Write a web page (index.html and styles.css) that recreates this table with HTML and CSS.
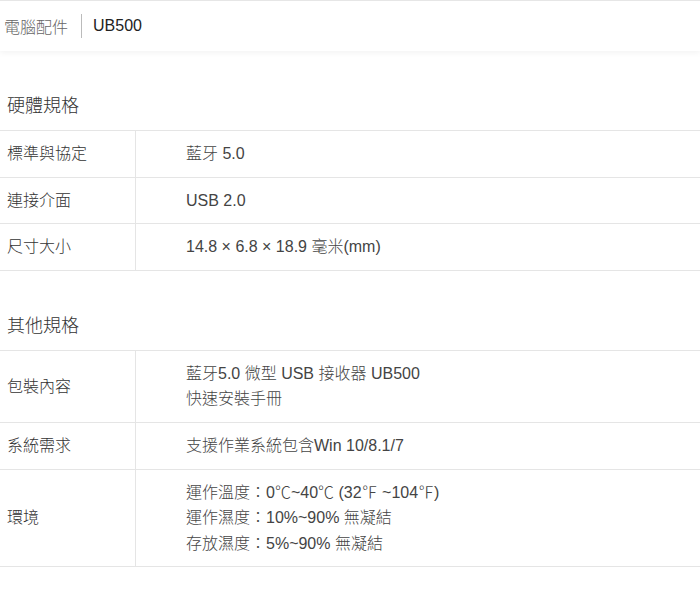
FILE: index.html
```html
<!DOCTYPE html>
<html lang="zh-Hant">
<head>
<meta charset="utf-8">
<title>UB500</title>
<link rel="stylesheet" href="styles.css">
</head>
<body>
<header class="topbar">
  <span class="crumb">電腦配件</span>
  <span class="sep"></span>
  <span class="model">UB500</span>
</header>

<section class="spec">
  <h2 class="spec-title">硬體規格</h2>
  <table class="spec-table">
    <tr><th>標準與協定</th><td>藍牙 5.0</td></tr>
    <tr><th>連接介面</th><td>USB 2.0</td></tr>
    <tr><th>尺寸大小</th><td>14.8 × 6.8 × 18.9 毫米(mm)</td></tr>
  </table>
</section>

<section class="spec">
  <h2 class="spec-title">其他規格</h2>
  <table class="spec-table">
    <tr><th>包裝內容</th><td>藍牙5.0 微型 USB 接收器 UB500<br>快速安裝手冊</td></tr>
    <tr><th>系統需求</th><td>支援作業系統包含Win 10/8.1/7</td></tr>
    <tr><th>環境</th><td>運作溫度：0℃~40℃ (32℉ ~104℉)<br>運作濕度：10%~90% 無凝結<br>存放濕度：5%~90% 無凝結</td></tr>
  </table>
</section>
</body>
</html>
```
FILE: styles.css
```css
html, body {
  margin: 0;
  padding: 0;
  background: #fff;
}
body {
  font-family: "Liberation Sans", "Noto Sans CJK TC", sans-serif;
  font-size: 16px;
  font-weight: 300;
  color: #333;
}
.topbar {
  display: flex;
  align-items: center;
  height: 50px;
  padding-left: 4px;
  border-top: 1px solid #e6e6e6;
  box-shadow: 0 2px 6px rgba(0, 0, 0, 0.05);
}
.crumb {
  color: #666;
}
.sep {
  width: 1px;
  height: 24px;
  background: #bbb;
  margin: 0 11px 0 13px;
}
.model {
  color: #222;
}
.spec {
  margin-top: 43px;
}
.spec-title {
  margin: 0 0 12px 7px;
  font-size: 18px;
  font-weight: 300;
  line-height: 24px;
  color: #333;
}
.spec-table {
  width: 100%;
  border-collapse: collapse;
  border-top: 1px solid #e5e5e5;
}
.spec-table th,
.spec-table td {
  border-bottom: 1px solid #e5e5e5;
  padding: 10px 0;
  line-height: 25.6px;
  font-weight: 300;
  text-align: left;
  vertical-align: middle;
}
.spec-table th {
  width: 128px;
  padding-left: 7px;
  border-right: 1px solid #e5e5e5;
  color: #333;
}
.spec-table td {
  padding-left: 50px;
  color: #444;
}
```
